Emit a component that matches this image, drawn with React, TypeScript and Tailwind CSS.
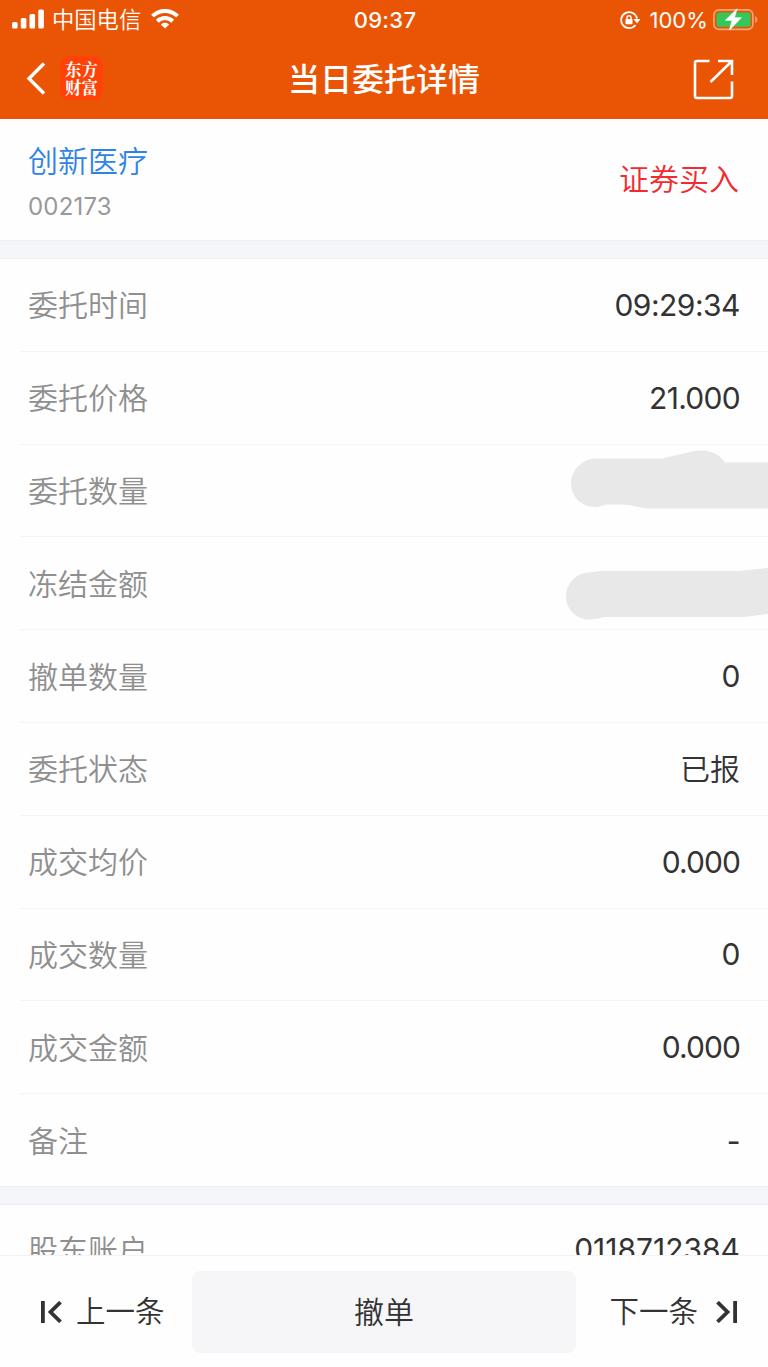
import type { ReactNode } from 'react';
import clsx from 'clsx';

type Row = {
  label: string;
  value: string;
  valueClass?: string;
  mask?: ReactNode;
};

const rows: Row[] = [
  { label: '委托时间', value: '09:29:34' },
  { label: '委托价格', value: '21.000', valueClass: 'tracking-[-0.7px]' },
  { label: '委托数量', value: '', mask: <QuantityMask /> },
  { label: '冻结金额', value: '', mask: <AmountMask /> },
  { label: '撤单数量', value: '0' },
  { label: '委托状态', value: '已报', valueClass: 'tracking-normal' },
  { label: '成交均价', value: '0.000', valueClass: 'tracking-[-0.9px]' },
  { label: '成交数量', value: '0' },
  { label: '成交金额', value: '0.000', valueClass: 'tracking-[-0.9px]' },
  { label: '备注', value: '-' },
];

function QuantityMask() {
  return (
    <svg className="absolute right-0 top-0 h-[93px] w-[208px]" viewBox="0 0 208 93" fill="#e8e8e8">
      <path d="M35 13.500H102L128 7.500C143 3 158 6 165 17.500H208V63.500H88C80 63 72 60 63 59.500H46C42 61 39 62 35 62C21 62 11 51 11 38C11 25 23 14 35 13.500Z" />
    </svg>
  );
}

function AmountMask() {
  return (
    <svg className="absolute right-0 top-0 h-[93px] w-[208px]" viewBox="0 0 208 93" fill="#e8e8e8">
      <path d="M40 34H178L208 31V77L184 80H47C41 80 37 82.500 29 82.500C16 82.500 6 72 6 59.500C6 48 14 38 25 36Z" />
    </svg>
  );
}

function StatusBar() {
  return (
    <div className="grid h-10 grid-cols-3 items-center pl-3 pr-[10px] text-[22px]">
      <div className="flex items-center">
        <svg className="h-[21px] w-8 shrink-0" viewBox="0 0 32 21" fill="white">
          <rect x="0" y="13" width="5.600" height="6.500" rx="1.500" />
          <rect x="8.800" y="9" width="5.600" height="10.500" rx="1.500" />
          <rect x="17.500" y="5" width="5.600" height="14.500" rx="1.500" />
          <rect x="26.300" y="0.500" width="5.600" height="19" rx="1.500" />
        </svg>
        <span className="ml-[8px] text-[22.3px]">中国电信</span>
        <svg className="ml-[10px] h-[21px] w-7 shrink-0" viewBox="0 0 28 21" fill="none" stroke="white" strokeWidth="4">
          <path d="M1.500 7.200C8.500 0.200 19.500 0.200 26.500 7.200" />
          <path d="M6.300 12.200C10.700 8 17.300 8 21.700 12.200" />
          <path d="M14 19.500L9.800 15.400C12.200 13.300 15.800 13.300 18.200 15.400Z" fill="white" stroke="none" />
        </svg>
      </div>
      <div className="text-center font-medium tracking-[0.3px]">09:37</div>
      <div className="flex items-center justify-end">
        <svg className="h-5 w-5" viewBox="0 0 20 20" fill="none" stroke="white" strokeWidth="1.800">
          <path d="M15.500 15A8 8 0 1 1 17 8.500" />
          <path d="M13.500 9H20.500L17 13.500Z" fill="white" stroke="none" />
          <rect x="5.500" y="9" width="7" height="5.300" rx="0.800" fill="white" stroke="none" />
          <path d="M7 9.500V7.800A2 2 0 0 1 11 7.800V9.500" strokeWidth="1.400" />
        </svg>
        <span className="ml-[9px] text-[22.1px]">100%</span>
        <svg className="ml-[5px] h-[24px] w-[45px]" viewBox="0 0 45 24">
          <rect x="0.900" y="1.900" width="39" height="19.500" rx="5" fill="none" stroke="#f6a778" strokeWidth="1.600" />
          <path d="M42.300 8C45 9.500 45 13.500 42.300 15Z" fill="#f6a778" />
          <rect x="3.500" y="4.500" width="34" height="14.300" rx="2.500" fill="#34c759" />
          <path d="M24 0.800L12.500 12.300H19.200L16.500 22L28.300 9.800H21.300Z" fill="white" stroke="white" strokeWidth="0.800" />
        </svg>
      </div>
    </div>
  );
}

function NavBar() {
  return (
    <div className="flex h-[79px] items-center justify-between pb-[3px] pl-[26px] pr-[34px]">
      <div className="flex w-[120px] items-center">
        <svg className="h-[33px] w-5" viewBox="0 0 20 33" fill="none" stroke="white" strokeWidth="3.400">
          <path d="M18 1.500L3 16.500L18 31.500" />
        </svg>
        <div className="ml-[14px] flex h-11 w-[43px] flex-col items-center justify-center rounded-[9px] bg-[#ff4208] font-['Noto_Serif_CJK_SC','Noto_Sans_CJK_SC',serif] text-[16.5px] font-bold leading-[18px]">
          <span>东方</span>
          <span>财富</span>
        </div>
      </div>
      <h1 className="pb-[2px] font-['Noto_Sans_CJK_SC',sans-serif] text-[32px] font-medium">当日委托详情</h1>
      <div className="flex w-[112px] justify-end">
        <svg className="mt-[2px] h-[41px] w-[41px]" viewBox="0 0 41 41" fill="none" stroke="white" strokeWidth="2.600">
          <path d="M16.500 2H4Q2 2 2 4V37Q2 39 4 39H37Q39 39 39 37V22.500" />
          <path d="M25 2H39V16M39 2L17.500 23" />
        </svg>
      </div>
    </div>
  );
}

function DetailRow({ label, value, valueClass = 'tracking-[-0.5px]', mask }: Row) {
  return (
    <div className="relative flex h-[92.8px] items-center justify-between pl-[9px] pr-7">
      <span className="pt-[1px] text-[#8f8f8f]">{label}</span>
      <span className={clsx('text-[#333333]', valueClass)}>{value}</span>
      {mask}
    </div>
  );
}

export default function App() {
  return (
    <div className="flex h-[1367px] w-[768px] flex-col overflow-hidden bg-[#fefefe] font-['Inter','Noto_Sans_CJK_SC_DemiLight','Noto_Sans_CJK_SC',sans-serif] text-[30px] font-[380] leading-none">
      <header className="h-[119px] shrink-0 bg-[#e95505] text-white">
        <StatusBar />
        <NavBar />
      </header>

      <main className="h-[1136px] shrink-0 overflow-hidden">
        <section className="flex h-[121px] items-center justify-between pl-7 pr-[29px]">
          <div className="pt-[6px]">
            <div className="text-[#3083e6]">创新医疗</div>
            <div className="mt-[19px] text-[24px] tracking-[0.2px] text-[#999999]">002173</div>
          </div>
          <div className="pb-[1px] text-[#f12b30]">证券买入</div>
        </section>

        <div className="h-[19px] border-y border-[#eeeff1] bg-[#f5f6f9]" />

        <section className="ml-[19px] h-[927px] divide-y divide-[#f5f5f6]">
          {rows.map((row) => (
            <DetailRow key={row.label} {...row} />
          ))}
        </section>

        <div className="h-[19px] border-y border-[#eeeff1] bg-[#f5f6f9]" />

        <section className="-mt-[2px] ml-[19px]">
          <DetailRow label="股东账户" value="0118712384" valueClass="tracking-normal" />
        </section>
      </main>

      <footer className="flex h-[112px] items-center border-t border-[#f3f3f4] text-[#333333]">
        <button className="flex w-48 items-center pl-10">
          <svg className="h-[22px] w-[22px]" viewBox="0 0 22 22" fill="none" stroke="#333333" strokeWidth="3.800">
            <path d="M2.900 0V22M20.500 1.200L10.500 11L20.500 20.800" />
          </svg>
          <span className="ml-[14px] text-[29.5px]">上一条</span>
        </button>
        <button className="h-[82px] w-96 rounded-lg bg-[#f6f6f9]">撤单</button>
        <button className="flex w-48 items-center justify-end pr-[30px]">
          <span className="mr-[18px] text-[29.5px]">下一条</span>
          <svg className="h-[22px] w-[22px]" viewBox="0 0 22 22" fill="none" stroke="#333333" strokeWidth="3.800">
            <path d="M19.100 0V22M1.500 1.200L11.500 11L1.500 20.800" />
          </svg>
        </button>
      </footer>
    </div>
  );
}
